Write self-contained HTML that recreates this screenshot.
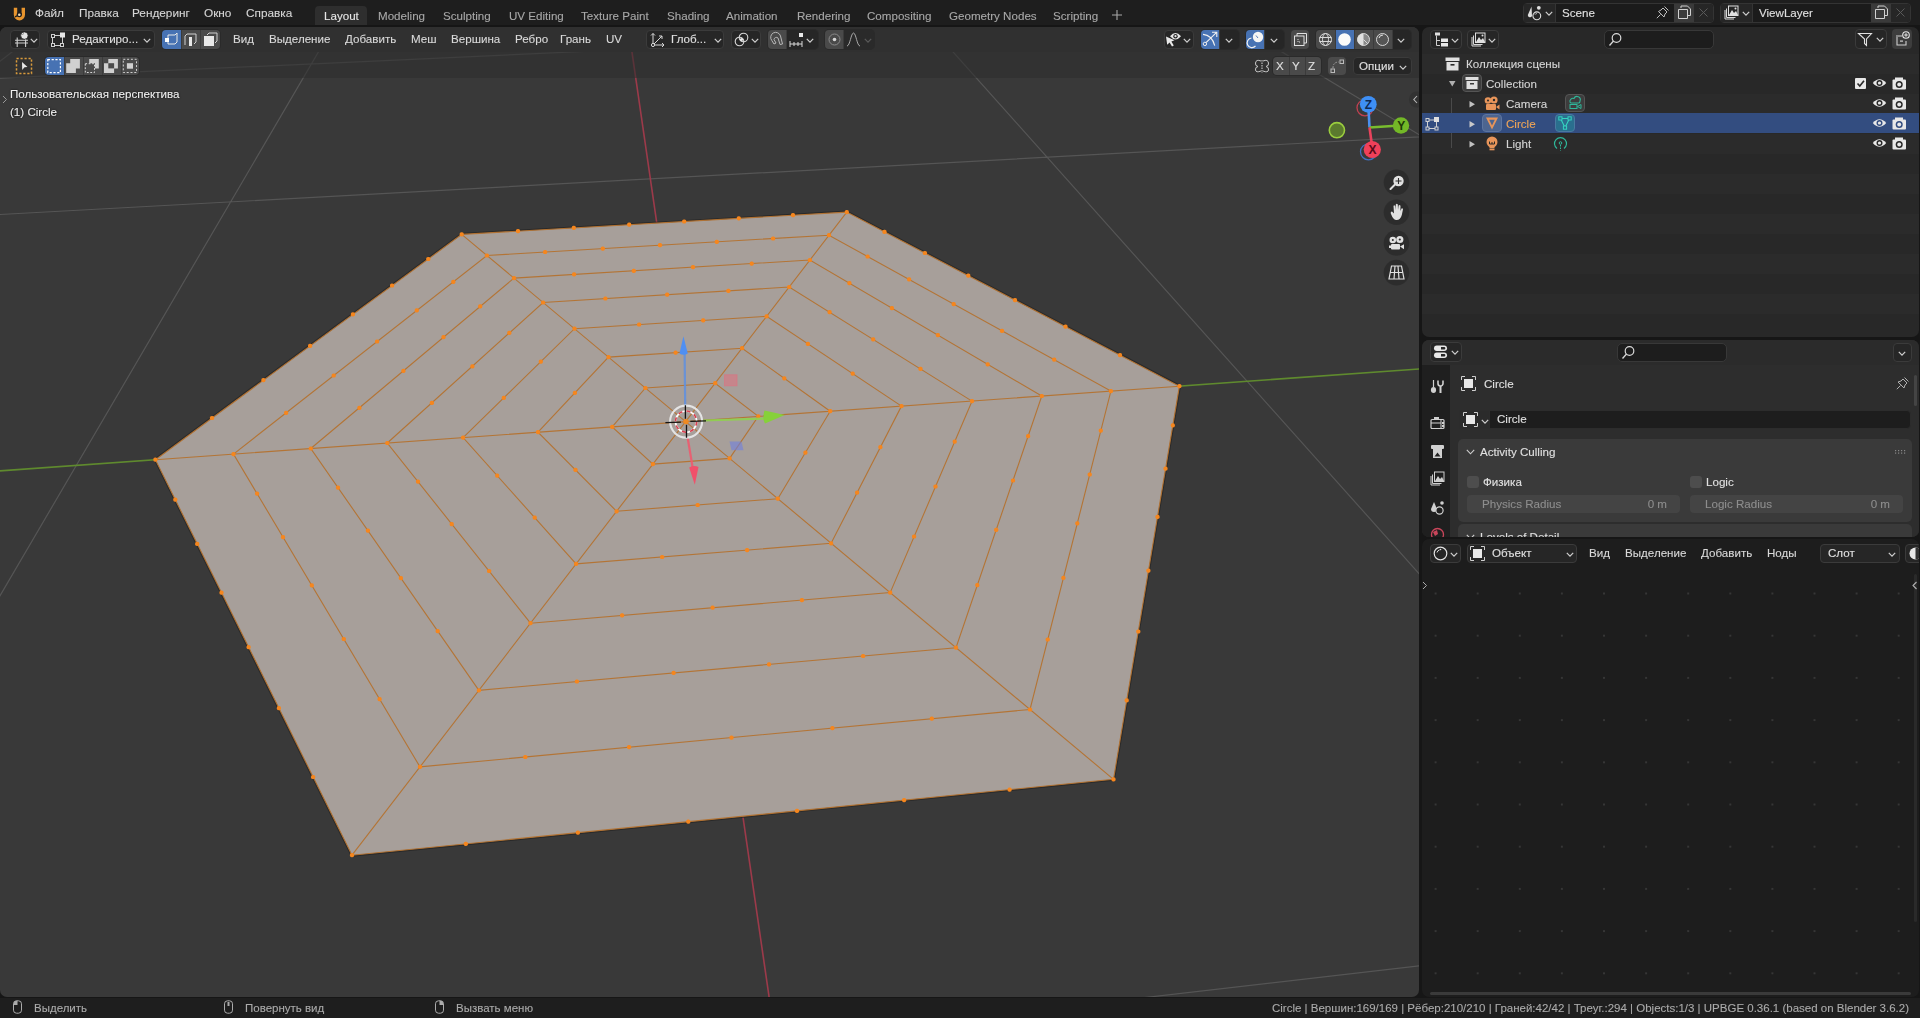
<!DOCTYPE html><html><head><meta charset="utf-8"><style>
*{box-sizing:border-box;margin:0;padding:0}
html,body{width:1920px;height:1018px;overflow:hidden;background:#161616;font-family:"Liberation Sans",sans-serif;font-size:11.5px;color:#d4d4d4}
.a{position:absolute}
.t{position:absolute;white-space:nowrap;line-height:14px;will-change:transform;-webkit-text-stroke:0.1px currentColor}
.btn{position:absolute;background:#282828;border:1px solid #3a3a3a;border-radius:4px}
.btn2{position:absolute;background:#545454;border-radius:4px}
svg{position:absolute;left:0;top:0;overflow:visible}
</style></head><body><div class="a" style="left:0;top:0;width:1920px;height:25px;background:#1e1e1e"></div><div class="a" style="left:0;top:998px;width:1920px;height:20px;background:#1e1e1e"></div><div id="vp" class="a" style="left:0;top:27px;width:1419px;height:970px;background:#393939;border-radius:7px;overflow:hidden"><svg width="1419" height="970" viewBox="0 27 1419 970" style="top:0;left:0"><path d="M-1864.9 316.6 L2514.1 76.9 M-1224.5 134.1 L2107.4 -18.1 M-2974.7 1473.8 L4697.9 586.8 M424.1 -128.5 L-2563.1 4972.8 M781.3 -140.3 L4996.3 4578.5 M238.7 -122.4 L-2907.0 2298.5 M953.5 -145.9 L4918.5 2243.4" stroke="#555555" stroke-width="1.2" fill="none"/><path d="M604.9 -134.5 L1336.8 4909.0" stroke="#9c3a4a" stroke-width="1.6" fill="none"/><path d="M-2995.2 685.9 L3213.4 240.1" stroke="#5f8a2e" stroke-width="1.6" fill="none"/><polygon points="155.4,459.7 461.7,234.4 846.8,212.1 1179.4,386.2 1113.5,779.3 352.0,855.2" fill="none" stroke="#242424" stroke-width="3" stroke-opacity="0.75" stroke-linejoin="round"/>
<polygon points="155.4,459.7 461.7,234.4 846.8,212.1 1179.4,386.2 1113.5,779.3 352.0,855.2" fill="#a79f9a"/>
<path d="M612.2 426.9 L645.4 388.0 L715.2 383.2 L758.3 416.4 L729.6 458.4 L652.9 464.1 Z M538.0 432.2 L608.5 357.1 L742.1 348.2 L830.2 411.2 L777.8 498.7 L616.6 511.3 Z M463.1 437.6 L574.5 328.7 L766.6 316.3 L901.5 406.1 L831.1 543.3 L576.1 563.9 Z M387.3 443.0 L543.1 302.5 L789.2 287.0 L972.0 401.1 L890.2 592.6 L530.5 623.2 Z M310.8 448.5 L514.0 278.1 L809.9 260.0 L1041.8 396.0 L956.0 647.7 L478.9 690.3 Z M233.5 454.1 L486.9 255.5 L829.0 235.2 L1110.9 391.1 L1030.0 709.5 L420.0 766.9 Z M155.4 459.7 L461.7 234.4 L846.8 212.1 L1179.4 386.2 L1113.5 779.3 L352.0 855.2 Z M685.6 421.6 L155.4 459.7 M685.6 421.6 L461.7 234.4 M685.6 421.6 L846.8 212.1 M685.6 421.6 L1179.4 386.2 M685.6 421.6 L1113.5 779.3 M685.6 421.6 L352.0 855.2" fill="none" stroke="#b4722f" stroke-width="1.1" stroke-opacity="0.95"/>
<g fill="#f5861e"><rect x="683.5" y="419.5" width="4.2" height="4.2" rx="1.7"/><rect x="610.1" y="424.8" width="4.2" height="4.2" rx="1.7"/><rect x="643.3" y="385.9" width="4.2" height="4.2" rx="1.7"/><rect x="713.1" y="381.1" width="4.2" height="4.2" rx="1.7"/><rect x="756.2" y="414.3" width="4.2" height="4.2" rx="1.7"/><rect x="727.5" y="456.3" width="4.2" height="4.2" rx="1.7"/><rect x="650.8" y="462.0" width="4.2" height="4.2" rx="1.7"/><rect x="535.9" y="430.1" width="4.2" height="4.2" rx="1.7"/><rect x="572.8" y="390.8" width="4.2" height="4.2" rx="1.7"/><rect x="606.4" y="355.0" width="4.2" height="4.2" rx="1.7"/><rect x="673.5" y="350.6" width="4.2" height="4.2" rx="1.7"/><rect x="740.0" y="346.1" width="4.2" height="4.2" rx="1.7"/><rect x="782.2" y="376.3" width="4.2" height="4.2" rx="1.7"/><rect x="828.1" y="409.1" width="4.2" height="4.2" rx="1.7"/><rect x="803.3" y="450.6" width="4.2" height="4.2" rx="1.7"/><rect x="775.7" y="496.6" width="4.2" height="4.2" rx="1.7"/><rect x="695.6" y="502.9" width="4.2" height="4.2" rx="1.7"/><rect x="614.5" y="509.2" width="4.2" height="4.2" rx="1.7"/><rect x="573.4" y="467.8" width="4.2" height="4.2" rx="1.7"/><rect x="461.0" y="435.5" width="4.2" height="4.2" rx="1.7"/><rect x="501.7" y="395.7" width="4.2" height="4.2" rx="1.7"/><rect x="538.7" y="359.6" width="4.2" height="4.2" rx="1.7"/><rect x="572.4" y="326.6" width="4.2" height="4.2" rx="1.7"/><rect x="637.0" y="322.4" width="4.2" height="4.2" rx="1.7"/><rect x="701.1" y="318.3" width="4.2" height="4.2" rx="1.7"/><rect x="764.5" y="314.2" width="4.2" height="4.2" rx="1.7"/><rect x="805.8" y="341.7" width="4.2" height="4.2" rx="1.7"/><rect x="850.6" y="371.5" width="4.2" height="4.2" rx="1.7"/><rect x="899.4" y="404.0" width="4.2" height="4.2" rx="1.7"/><rect x="878.3" y="445.0" width="4.2" height="4.2" rx="1.7"/><rect x="855.0" y="490.5" width="4.2" height="4.2" rx="1.7"/><rect x="829.0" y="541.2" width="4.2" height="4.2" rx="1.7"/><rect x="745.0" y="548.0" width="4.2" height="4.2" rx="1.7"/><rect x="660.0" y="554.9" width="4.2" height="4.2" rx="1.7"/><rect x="574.0" y="561.8" width="4.2" height="4.2" rx="1.7"/><rect x="532.6" y="515.5" width="4.2" height="4.2" rx="1.7"/><rect x="495.1" y="473.6" width="4.2" height="4.2" rx="1.7"/><rect x="385.2" y="440.9" width="4.2" height="4.2" rx="1.7"/><rect x="429.8" y="400.7" width="4.2" height="4.2" rx="1.7"/><rect x="470.3" y="364.2" width="4.2" height="4.2" rx="1.7"/><rect x="507.2" y="330.8" width="4.2" height="4.2" rx="1.7"/><rect x="541.0" y="300.4" width="4.2" height="4.2" rx="1.7"/><rect x="603.3" y="296.4" width="4.2" height="4.2" rx="1.7"/><rect x="665.1" y="292.6" width="4.2" height="4.2" rx="1.7"/><rect x="726.3" y="288.7" width="4.2" height="4.2" rx="1.7"/><rect x="787.1" y="284.9" width="4.2" height="4.2" rx="1.7"/><rect x="827.5" y="310.1" width="4.2" height="4.2" rx="1.7"/><rect x="871.1" y="337.3" width="4.2" height="4.2" rx="1.7"/><rect x="918.4" y="366.8" width="4.2" height="4.2" rx="1.7"/><rect x="969.9" y="399.0" width="4.2" height="4.2" rx="1.7"/><rect x="952.6" y="439.5" width="4.2" height="4.2" rx="1.7"/><rect x="933.4" y="484.4" width="4.2" height="4.2" rx="1.7"/><rect x="912.0" y="534.4" width="4.2" height="4.2" rx="1.7"/><rect x="888.1" y="590.5" width="4.2" height="4.2" rx="1.7"/><rect x="799.8" y="598.0" width="4.2" height="4.2" rx="1.7"/><rect x="710.5" y="605.6" width="4.2" height="4.2" rx="1.7"/><rect x="620.0" y="613.3" width="4.2" height="4.2" rx="1.7"/><rect x="528.4" y="621.1" width="4.2" height="4.2" rx="1.7"/><rect x="487.0" y="568.9" width="4.2" height="4.2" rx="1.7"/><rect x="449.6" y="522.0" width="4.2" height="4.2" rx="1.7"/><rect x="415.9" y="479.5" width="4.2" height="4.2" rx="1.7"/><rect x="308.7" y="446.4" width="4.2" height="4.2" rx="1.7"/><rect x="357.3" y="405.7" width="4.2" height="4.2" rx="1.7"/><rect x="401.3" y="368.8" width="4.2" height="4.2" rx="1.7"/><rect x="441.4" y="335.1" width="4.2" height="4.2" rx="1.7"/><rect x="478.1" y="304.3" width="4.2" height="4.2" rx="1.7"/><rect x="511.9" y="276.0" width="4.2" height="4.2" rx="1.7"/><rect x="572.0" y="272.3" width="4.2" height="4.2" rx="1.7"/><rect x="631.7" y="268.7" width="4.2" height="4.2" rx="1.7"/><rect x="690.9" y="265.1" width="4.2" height="4.2" rx="1.7"/><rect x="749.6" y="261.5" width="4.2" height="4.2" rx="1.7"/><rect x="807.8" y="257.9" width="4.2" height="4.2" rx="1.7"/><rect x="847.3" y="281.1" width="4.2" height="4.2" rx="1.7"/><rect x="889.8" y="306.0" width="4.2" height="4.2" rx="1.7"/><rect x="935.8" y="333.0" width="4.2" height="4.2" rx="1.7"/><rect x="985.6" y="362.2" width="4.2" height="4.2" rx="1.7"/><rect x="1039.7" y="393.9" width="4.2" height="4.2" rx="1.7"/><rect x="1026.0" y="434.0" width="4.2" height="4.2" rx="1.7"/><rect x="1010.9" y="478.4" width="4.2" height="4.2" rx="1.7"/><rect x="994.1" y="527.8" width="4.2" height="4.2" rx="1.7"/><rect x="975.2" y="583.1" width="4.2" height="4.2" rx="1.7"/><rect x="953.9" y="645.6" width="4.2" height="4.2" rx="1.7"/><rect x="861.0" y="653.9" width="4.2" height="4.2" rx="1.7"/><rect x="766.9" y="662.3" width="4.2" height="4.2" rx="1.7"/><rect x="671.5" y="670.8" width="4.2" height="4.2" rx="1.7"/><rect x="574.8" y="679.4" width="4.2" height="4.2" rx="1.7"/><rect x="476.8" y="688.2" width="4.2" height="4.2" rx="1.7"/><rect x="435.6" y="629.0" width="4.2" height="4.2" rx="1.7"/><rect x="398.8" y="576.0" width="4.2" height="4.2" rx="1.7"/><rect x="365.8" y="528.5" width="4.2" height="4.2" rx="1.7"/><rect x="335.9" y="485.5" width="4.2" height="4.2" rx="1.7"/><rect x="231.4" y="452.0" width="4.2" height="4.2" rx="1.7"/><rect x="284.0" y="410.8" width="4.2" height="4.2" rx="1.7"/><rect x="331.6" y="373.4" width="4.2" height="4.2" rx="1.7"/><rect x="375.0" y="339.4" width="4.2" height="4.2" rx="1.7"/><rect x="414.7" y="308.3" width="4.2" height="4.2" rx="1.7"/><rect x="451.2" y="279.7" width="4.2" height="4.2" rx="1.7"/><rect x="484.8" y="253.4" width="4.2" height="4.2" rx="1.7"/><rect x="543.0" y="249.9" width="4.2" height="4.2" rx="1.7"/><rect x="600.7" y="246.5" width="4.2" height="4.2" rx="1.7"/><rect x="657.9" y="243.1" width="4.2" height="4.2" rx="1.7"/><rect x="714.7" y="239.7" width="4.2" height="4.2" rx="1.7"/><rect x="771.0" y="236.4" width="4.2" height="4.2" rx="1.7"/><rect x="826.9" y="233.1" width="4.2" height="4.2" rx="1.7"/><rect x="865.5" y="254.4" width="4.2" height="4.2" rx="1.7"/><rect x="907.0" y="277.3" width="4.2" height="4.2" rx="1.7"/><rect x="951.6" y="302.0" width="4.2" height="4.2" rx="1.7"/><rect x="999.9" y="328.7" width="4.2" height="4.2" rx="1.7"/><rect x="1052.1" y="357.6" width="4.2" height="4.2" rx="1.7"/><rect x="1108.8" y="389.0" width="4.2" height="4.2" rx="1.7"/><rect x="1098.7" y="428.6" width="4.2" height="4.2" rx="1.7"/><rect x="1087.6" y="472.4" width="4.2" height="4.2" rx="1.7"/><rect x="1075.2" y="521.2" width="4.2" height="4.2" rx="1.7"/><rect x="1061.3" y="575.8" width="4.2" height="4.2" rx="1.7"/><rect x="1045.6" y="637.4" width="4.2" height="4.2" rx="1.7"/><rect x="1027.9" y="707.4" width="4.2" height="4.2" rx="1.7"/><rect x="929.7" y="716.6" width="4.2" height="4.2" rx="1.7"/><rect x="830.3" y="726.0" width="4.2" height="4.2" rx="1.7"/><rect x="729.4" y="735.5" width="4.2" height="4.2" rx="1.7"/><rect x="627.0" y="745.1" width="4.2" height="4.2" rx="1.7"/><rect x="523.2" y="754.9" width="4.2" height="4.2" rx="1.7"/><rect x="417.9" y="764.8" width="4.2" height="4.2" rx="1.7"/><rect x="377.5" y="697.0" width="4.2" height="4.2" rx="1.7"/><rect x="341.7" y="636.9" width="4.2" height="4.2" rx="1.7"/><rect x="309.7" y="583.3" width="4.2" height="4.2" rx="1.7"/><rect x="280.9" y="535.1" width="4.2" height="4.2" rx="1.7"/><rect x="255.0" y="491.5" width="4.2" height="4.2" rx="1.7"/><rect x="153.3" y="457.6" width="4.2" height="4.2" rx="1.7"/><rect x="209.9" y="415.9" width="4.2" height="4.2" rx="1.7"/><rect x="261.3" y="378.1" width="4.2" height="4.2" rx="1.7"/><rect x="308.0" y="343.8" width="4.2" height="4.2" rx="1.7"/><rect x="350.8" y="312.3" width="4.2" height="4.2" rx="1.7"/><rect x="390.0" y="283.4" width="4.2" height="4.2" rx="1.7"/><rect x="426.2" y="256.9" width="4.2" height="4.2" rx="1.7"/><rect x="459.6" y="232.3" width="4.2" height="4.2" rx="1.7"/><rect x="515.9" y="229.0" width="4.2" height="4.2" rx="1.7"/><rect x="571.7" y="225.8" width="4.2" height="4.2" rx="1.7"/><rect x="627.1" y="222.6" width="4.2" height="4.2" rx="1.7"/><rect x="682.1" y="219.4" width="4.2" height="4.2" rx="1.7"/><rect x="736.7" y="216.3" width="4.2" height="4.2" rx="1.7"/><rect x="790.9" y="213.1" width="4.2" height="4.2" rx="1.7"/><rect x="844.7" y="210.0" width="4.2" height="4.2" rx="1.7"/><rect x="882.4" y="229.8" width="4.2" height="4.2" rx="1.7"/><rect x="922.8" y="250.9" width="4.2" height="4.2" rx="1.7"/><rect x="966.2" y="273.6" width="4.2" height="4.2" rx="1.7"/><rect x="1012.9" y="298.1" width="4.2" height="4.2" rx="1.7"/><rect x="1063.4" y="324.5" width="4.2" height="4.2" rx="1.7"/><rect x="1117.9" y="353.0" width="4.2" height="4.2" rx="1.7"/><rect x="1177.3" y="384.1" width="4.2" height="4.2" rx="1.7"/><rect x="1170.7" y="423.2" width="4.2" height="4.2" rx="1.7"/><rect x="1163.4" y="466.5" width="4.2" height="4.2" rx="1.7"/><rect x="1155.4" y="514.7" width="4.2" height="4.2" rx="1.7"/><rect x="1146.3" y="568.6" width="4.2" height="4.2" rx="1.7"/><rect x="1136.2" y="629.4" width="4.2" height="4.2" rx="1.7"/><rect x="1124.6" y="698.3" width="4.2" height="4.2" rx="1.7"/><rect x="1111.4" y="777.2" width="4.2" height="4.2" rx="1.7"/><rect x="1007.5" y="787.6" width="4.2" height="4.2" rx="1.7"/><rect x="902.0" y="798.1" width="4.2" height="4.2" rx="1.7"/><rect x="794.9" y="808.8" width="4.2" height="4.2" rx="1.7"/><rect x="686.2" y="819.6" width="4.2" height="4.2" rx="1.7"/><rect x="575.8" y="830.6" width="4.2" height="4.2" rx="1.7"/><rect x="463.7" y="841.8" width="4.2" height="4.2" rx="1.7"/><rect x="349.9" y="853.1" width="4.2" height="4.2" rx="1.7"/><rect x="311.0" y="774.9" width="4.2" height="4.2" rx="1.7"/><rect x="276.8" y="706.0" width="4.2" height="4.2" rx="1.7"/><rect x="246.5" y="645.0" width="4.2" height="4.2" rx="1.7"/><rect x="219.4" y="590.6" width="4.2" height="4.2" rx="1.7"/><rect x="195.1" y="541.7" width="4.2" height="4.2" rx="1.7"/><rect x="173.2" y="497.6" width="4.2" height="4.2" rx="1.7"/></g><rect x="724.5" y="374.8" width="12.5" height="11" fill="#e07080" fill-opacity="0.55" stroke="#e07080" stroke-opacity="0.6"/><path d="M729.5 441.6 L741.5 441.6 L743.5 450.2 L731.5 450.2 Z" fill="#7080e0" fill-opacity="0.6"/><path d="M685.2 405 L684.6 352" stroke="#5e8fe0" stroke-width="2.2" stroke-opacity="0.85"/><path d="M683.4 336.3 L687.8 353.5 Q683.5 356 679.5 353.5 Z" fill="#4f8ff2"/><path d="M703 420.5 L764 418.6" stroke="#8fd14f" stroke-width="2.2" stroke-opacity="0.9"/><path d="M784.8 414.9 L764.5 410.4 Q762 418.4 765 423.4 Z" fill="#86d13a"/><path d="M687.7 438 L693 469.8" stroke="#ee5a6e" stroke-width="2.2" stroke-opacity="0.9"/><path d="M694.8 484.8 L689.2 467.5 Q694 465 698.5 467 Z" fill="#f0506a"/><circle cx="686.1" cy="421.6" r="16" fill="none" stroke="#e4e4e4" stroke-width="2.1"/><circle cx="686.1" cy="421.6" r="10.6" fill="none" stroke="#ffffff" stroke-width="1.6"/><circle cx="686.1" cy="421.6" r="10.6" fill="none" stroke="#d84050" stroke-width="1.6" stroke-dasharray="4.16 4.16"/><path d="M685.4 405.3 V418.8 M686.5 424.7 V437.7 M665.4 422.6 L681 422.2 M690.3 421.4 L706 420.8" stroke="#151515" stroke-width="1.3"/><circle cx="686.1" cy="421.6" r="2.6" fill="#f08a20"/><circle cx="1365" cy="107.8" r="8" fill="none" stroke="#c04050" stroke-width="1.3"/><circle cx="1368.5" cy="151.8" r="8" fill="none" stroke="#4070c0" stroke-width="1.3"/><circle cx="1336.9" cy="130.2" r="7.6" fill="#5b7a2e" stroke="#9acd3e" stroke-width="1.6"/><path d="M1369.5 127.5 L1368.5 108" stroke="#4a90f0" stroke-width="2.6"/><path d="M1369.5 127.5 L1396 125.8" stroke="#79bd2e" stroke-width="2.6"/><path d="M1369.5 127.5 L1371.8 144" stroke="#e8435c" stroke-width="2.6"/><circle cx="1368.3" cy="104.3" r="8.4" fill="#3e8ff5"/><circle cx="1401" cy="125.5" r="8.2" fill="#73b827"/><circle cx="1372.3" cy="149.5" r="8.6" fill="#f0405a"/><text x="1368.3" y="108.6" font-family="Liberation Sans" font-weight="bold" font-size="12" text-anchor="middle" fill="#0f2a55">Z</text><text x="1401.2" y="129.8" font-family="Liberation Sans" font-weight="bold" font-size="12" text-anchor="middle" fill="#1f3a08">Y</text><text x="1372.5" y="153.8" font-family="Liberation Sans" font-weight="bold" font-size="12" text-anchor="middle" fill="#5a0a18">X</text><circle cx="1396.5" cy="182.2" r="12.8" fill="#2b2b2b" fill-opacity="0.9"/><circle cx="1396.5" cy="212.3" r="12.8" fill="#2b2b2b" fill-opacity="0.9"/><circle cx="1396.5" cy="243" r="12.8" fill="#2b2b2b" fill-opacity="0.9"/><circle cx="1396.5" cy="272.6" r="12.8" fill="#2b2b2b" fill-opacity="0.9"/><circle cx="1398.5" cy="181" r="5.2" fill="#e0e0e0"/><path d="M1398.5 178 V184 M1395.5 181 H1401.5" stroke="#2b2b2b" stroke-width="1.1"/><path d="M1395 184.5 L1390.5 189" stroke="#e0e0e0" stroke-width="2" stroke-linecap="round"/><path d="M1391 214 Q1390 212 1392 211.5 L1394 213.5 L1393.5 206 Q1394 204.5 1395.2 206 L1395.6 210 L1395.8 204.5 Q1396.8 203 1397.8 204.5 L1398 210 L1398.6 205.5 Q1399.6 204.2 1400.5 205.8 L1400.4 211 L1401.5 208.5 Q1402.6 207.8 1403 209.2 L1401.8 215 Q1400.5 220 1396.5 220 Q1393.2 220 1391 214 Z" fill="#e0e0e0"/><circle cx="1392.8" cy="240" r="3.3" fill="#e0e0e0"/><circle cx="1399.8" cy="239.5" r="3.6" fill="#e0e0e0"/><circle cx="1392.8" cy="240" r="1" fill="#2b2b2b"/><circle cx="1399.8" cy="239.5" r="1.1" fill="#2b2b2b"/><rect x="1391" y="244" width="9" height="5.5" rx="1" fill="#e0e0e0"/><path d="M1400 246.5 L1404 244.2 V249.3 Z" fill="#e0e0e0"/><rect x="1389" y="245.5" width="2" height="2.5" fill="#e0e0e0"/><path d="M1391.5 266 H1401.5 L1404 279 H1389 Z M1390.3 272.5 H1402.7 M1395 266 L1394 279 M1398 266 L1399 279" fill="none" stroke="#e0e0e0" stroke-width="1.2"/><circle cx="1417" cy="99.5" r="8" fill="#2f2f2f" fill-opacity="0.7"/><path d="M1417 96 L1413.8 99.5 L1417 103" fill="none" stroke="#b8b8b8" stroke-width="1.1"/></svg><div class="a" style="left:0px;top:0px;width:1419px;height:25px;background:#303030;border-radius:0px;"></div><div class="a" style="left:0px;top:25px;width:1419px;height:26px;background:rgba(47,47,47,0.6);border-radius:0px;"></div><div class="a" style="left:10px;top:3px;width:30px;height:19px;background:#262626;border-radius:4px;border:1px solid #3b3b3b;"></div><svg width="16" height="16" viewBox="0 0 16 16" style="left:14px;top:5px"><path d="M1 8.2 H14 M1 11 H14 M3.2 5.5 V15 M11.6 6 V15" stroke="#d0d0d0" stroke-width="1.1" fill="none"/><circle cx="10.4" cy="3.6" r="3.7" fill="#e4e4e4" stroke="#262626" stroke-width=".8"/><path d="M8.3 2.8 A2 2 0 0 1 10 1.6" fill="none" stroke="#777" stroke-width=".8"/></svg><svg width="8" height="5" viewBox="0 0 8 5" style="left:30px;top:11px"><path d="M0.8 0.8 L4.0 4.2 L7.2 0.8" fill="none" stroke="#cfcfcf" stroke-width="1.2"/></svg><div class="a" style="left:47px;top:3px;width:108px;height:19px;background:#262626;border-radius:4px;border:1px solid #3b3b3b;"></div><svg width="15" height="15" viewBox="0 0 15 15" style="left:51px;top:5px"><rect x="1.5" y="3.5" width="10" height="10" fill="none" stroke="#cfcfcf" stroke-width="1"/><rect x="0.5" y="2.5" width="3" height="3" fill="#262626" stroke="#cfcfcf"/><rect x="0.5" y="11.5" width="3" height="3" fill="#262626" stroke="#cfcfcf"/><rect x="9.5" y="11.5" width="3" height="3" fill="#262626" stroke="#cfcfcf"/><rect x="9" y="0.5" width="5" height="5" fill="#e8e8e8"/></svg><div class="t" style="left:72px;top:5px;color:#e0e0e0;font-size:11.6px;">Редактиро...</div><svg width="8" height="5" viewBox="0 0 8 5" style="left:143px;top:11px"><path d="M0.8 0.8 L4.0 4.2 L7.2 0.8" fill="none" stroke="#cfcfcf" stroke-width="1.2"/></svg><div class="a" style="left:162px;top:3px;width:58px;height:19px;border-radius:4px;overflow:hidden;display:flex;box-shadow:0 0 0 1px #2a2a2a"><div style="width:19px;height:19px;background:#4772b3;"></div><div style="width:19px;height:19px;background:#4a4a4a;border-left:1px solid #3b3b3b;"></div><div style="width:20px;height:19px;background:#4a4a4a;border-left:1px solid #3b3b3b;"></div></div><svg width="15" height="15" viewBox="0 0 15 15" style="left:164px;top:5px"><path d="M4 3 H11 L13 1 M4 3 V11 L4 12 H11 L13 10 V1" fill="none" stroke="#e8e8e8" stroke-width="1"/><rect x="1" y="6" width="4" height="4" fill="#fff"/></svg><svg width="15" height="15" viewBox="0 0 15 15" style="left:183px;top:5px"><path d="M2 13 V4 L4 2 H13 V10 L11 12" fill="none" stroke="#d0d0d0" stroke-width="1"/><rect x="6" y="5" width="3" height="9" fill="#e8e8e8"/></svg><svg width="15" height="15" viewBox="0 0 15 15" style="left:203px;top:5px"><path d="M4 3 L6 1 H14 V9 L12 11" fill="none" stroke="#d0d0d0" stroke-width="1"/><rect x="1" y="4" width="10" height="10" fill="#e8e8e8"/></svg><div class="t" style="left:233px;top:5px;color:#d9d9d9;font-size:11.6px;">Вид</div><div class="t" style="left:269px;top:5px;color:#d9d9d9;font-size:11.6px;">Выделение</div><div class="t" style="left:345px;top:5px;color:#d9d9d9;font-size:11.6px;">Добавить</div><div class="t" style="left:411px;top:5px;color:#d9d9d9;font-size:11.6px;">Меш</div><div class="t" style="left:451px;top:5px;color:#d9d9d9;font-size:11.6px;">Вершина</div><div class="t" style="left:515px;top:5px;color:#d9d9d9;font-size:11.6px;">Ребро</div><div class="t" style="left:560px;top:5px;color:#d9d9d9;font-size:11.6px;">Грань</div><div class="t" style="left:606px;top:5px;color:#d9d9d9;font-size:11.6px;">UV</div><div class="a" style="left:646px;top:3px;width:78px;height:19px;background:#262626;border-radius:4px;border:1px solid #3b3b3b;"></div><svg width="15" height="15" viewBox="0 0 15 15" style="left:650px;top:5px"><path d="M3 13 V1.5 M1 3.5 L3 1.5 L5 3.5 M3 13 H14 M12 11 L14 13 L12 15 M3 13 L12 4 M9 4 H12 V7" fill="none" stroke="#d8d8d8" stroke-width="1"/><circle cx="3" cy="13" r="1.6" fill="#262626" stroke="#d8d8d8"/></svg><div class="t" style="left:671px;top:5px;color:#e0e0e0;font-size:11.6px;">Глоб...</div><svg width="8" height="5" viewBox="0 0 8 5" style="left:714px;top:11px"><path d="M0.8 0.8 L4.0 4.2 L7.2 0.8" fill="none" stroke="#cfcfcf" stroke-width="1.2"/></svg><div class="a" style="left:731px;top:3px;width:30px;height:19px;background:#262626;border-radius:4px;border:1px solid #3b3b3b;"></div><svg width="15" height="15" viewBox="0 0 15 15" style="left:734px;top:5px"><circle cx="5.5" cy="9.5" r="4.3" fill="none" stroke="#d8d8d8" stroke-width="1.1"/><circle cx="9.5" cy="5.5" r="4.3" fill="none" stroke="#d8d8d8" stroke-width="1.1"/><circle cx="7.5" cy="7.5" r="1.6" fill="#e8e8e8"/></svg><svg width="8" height="5" viewBox="0 0 8 5" style="left:751px;top:11px"><path d="M0.8 0.8 L4.0 4.2 L7.2 0.8" fill="none" stroke="#cfcfcf" stroke-width="1.2"/></svg><div class="a" style="left:768px;top:3px;width:50px;height:19px;border-radius:4px;overflow:hidden;display:flex;box-shadow:0 0 0 1px #2a2a2a"><div style="width:18px;height:19px;background:#4a4a4a;"></div><div style="width:32px;height:19px;background:#262626;border-left:1px solid #3b3b3b;"></div></div><svg width="15" height="15" viewBox="0 0 15 15" style="left:770px;top:5px"><path d="M4 12 L1.8 8.5 A5 5 0 1 1 10.5 4 L12.5 12 L10 12.5 L8 6 A2.4 2.4 0 0 0 4 7.5 L6 11 Z" fill="none" stroke="#b8b8b8" stroke-width="1"/></svg><svg width="15" height="15" viewBox="0 0 15 15" style="left:789px;top:5px"><path d="M1 9 V15 M13 9 V15 M1 12 H13 M5 10 V14 M9 10 V14" stroke="#d8d8d8" stroke-width="1" fill="none"/><rect x="10" y="1" width="4" height="4" fill="#e8e8e8"/></svg><svg width="8" height="5" viewBox="0 0 8 5" style="left:806px;top:11px"><path d="M0.8 0.8 L4.0 4.2 L7.2 0.8" fill="none" stroke="#cfcfcf" stroke-width="1.2"/></svg><div class="a" style="left:825px;top:3px;width:49px;height:19px;border-radius:4px;overflow:hidden;display:flex;box-shadow:0 0 0 1px #2a2a2a"><div style="width:18px;height:19px;background:#4a4a4a;"></div><div style="width:31px;height:19px;background:#2a2a2a;border-left:1px solid #3b3b3b;"></div></div><svg width="15" height="15" viewBox="0 0 15 15" style="left:827px;top:5px"><circle cx="7.5" cy="7.5" r="5.5" fill="none" stroke="#8a8a8a" stroke-width="1"/><circle cx="7.5" cy="7.5" r="1.8" fill="#d8d8d8"/></svg><svg width="15" height="15" viewBox="0 0 15 15" style="left:846px;top:5px"><path d="M1 14 C4 14 5 1 7.5 1 C10 1 11 14 14 14" fill="none" stroke="#a8a8a8" stroke-width="1"/></svg><svg width="8" height="5" viewBox="0 0 8 5" style="left:864px;top:11px"><path d="M0.8 0.8 L4.0 4.2 L7.2 0.8" fill="none" stroke="#5a5a5a" stroke-width="1.2"/></svg><div class="a" style="left:1164px;top:3px;width:30px;height:19px;background:#262626;border-radius:4px;border:1px solid #3b3b3b;"></div><svg width="18" height="17" viewBox="0 0 18 17" style="left:1165px;top:4px"><path d="M1 5.5 L9.5 9.3 L6.4 10.4 L8.8 14.6 L7 15.6 L4.6 11.4 L2.2 13.8 Z" fill="#e8e8e8"/><path d="M5 5.2 Q10.5 -1.2 16 5.2 Q10.5 11.6 5 5.2 Z" fill="#e8e8e8"/><circle cx="10.5" cy="5.2" r="2.2" fill="#262626"/><circle cx="10.5" cy="5.2" r="1.1" fill="#e8e8e8"/></svg><svg width="8" height="5" viewBox="0 0 8 5" style="left:1183px;top:11px"><path d="M0.8 0.8 L4.0 4.2 L7.2 0.8" fill="none" stroke="#cfcfcf" stroke-width="1.2"/></svg><div class="a" style="left:1201px;top:3px;width:38px;height:19px;border-radius:4px;overflow:hidden;display:flex;box-shadow:0 0 0 1px #2a2a2a"><div style="width:18px;height:19px;background:#4772b3;"></div><div style="width:20px;height:19px;background:#262626;border-left:1px solid #3b3b3b;"></div></div><svg width="18" height="18" viewBox="0 0 18 18" style="left:1201px;top:3px"><path d="M2 4.4 Q11 5 13.7 15.7" fill="none" stroke="#f0f0f0" stroke-width="1.1"/><path d="M5 12.7 L15.6 2.4 M11 2.3 H15.8 V7" fill="none" stroke="#f0f0f0" stroke-width="1.1"/><circle cx="3.9" cy="13.9" r="1.7" fill="#4772b3" stroke="#f0f0f0" stroke-width="1"/></svg><svg width="8" height="5" viewBox="0 0 8 5" style="left:1225px;top:11px"><path d="M0.8 0.8 L4.0 4.2 L7.2 0.8" fill="none" stroke="#cfcfcf" stroke-width="1.2"/></svg><div class="a" style="left:1246px;top:3px;width:38px;height:19px;border-radius:4px;overflow:hidden;display:flex;box-shadow:0 0 0 1px #2a2a2a"><div style="width:18px;height:19px;background:#4772b3;"></div><div style="width:20px;height:19px;background:#262626;border-left:1px solid #3b3b3b;"></div></div><svg width="18" height="18" viewBox="0 0 18 18" style="left:1247px;top:3px"><path d="M8.5 16 A4.8 4.8 0 1 1 4.5 8" fill="none" stroke="#f0f0f0" stroke-width="1.2"/><circle cx="11" cy="7" r="5.2" fill="#f4f4f4"/><path d="M9 5.5 L11 8" stroke="#4772b3" stroke-width=".9"/></svg><svg width="8" height="5" viewBox="0 0 8 5" style="left:1270px;top:11px"><path d="M0.8 0.8 L4.0 4.2 L7.2 0.8" fill="none" stroke="#cfcfcf" stroke-width="1.2"/></svg><div class="a" style="left:1291px;top:3px;width:18px;height:19px;background:#4a4a4a;border-radius:4px;"></div><svg width="15" height="15" viewBox="0 0 15 15" style="left:1293px;top:5px"><path d="M4 4 V1.5 H13.5 V11 H11" fill="none" stroke="#e0e0e0" stroke-width="1"/><rect x="1.5" y="4" width="9.5" height="9.5" fill="none" stroke="#e0e0e0" stroke-width="1"/><path d="M5 7 V10 H8" fill="none" stroke="#e0e0e0" stroke-width="1" stroke-dasharray="1 1"/></svg><div class="a" style="left:1316px;top:3px;width:95px;height:19px;border-radius:4px;overflow:hidden;display:flex;box-shadow:0 0 0 1px #2a2a2a"><div style="width:19px;height:19px;background:#4a4a4a;"></div><div style="width:19px;height:19px;background:#4772b3;border-left:1px solid #3b3b3b;"></div><div style="width:19px;height:19px;background:#4a4a4a;border-left:1px solid #3b3b3b;"></div><div style="width:19px;height:19px;background:#4a4a4a;border-left:1px solid #3b3b3b;"></div><div style="width:19px;height:19px;background:#262626;border-left:1px solid #3b3b3b;"></div></div><svg width="15" height="15" viewBox="0 0 15 15" style="left:1318px;top:5px"><circle cx="7.5" cy="7.5" r="6" fill="none" stroke="#d8d8d8" stroke-width="1"/><ellipse cx="7.5" cy="7.5" rx="3" ry="6" fill="none" stroke="#d8d8d8" stroke-width="1"/><path d="M1.5 5.5 H13.5 M1.5 9.5 H13.5" stroke="#d8d8d8" stroke-width="1"/></svg><svg width="15" height="15" viewBox="0 0 15 15" style="left:1337px;top:5px"><circle cx="7.5" cy="7.5" r="6.3" fill="#fafafa"/></svg><svg width="15" height="15" viewBox="0 0 15 15" style="left:1356px;top:5px"><circle cx="7.5" cy="7.5" r="6" fill="#888" stroke="#d8d8d8" stroke-width="1"/><path d="M7.5 1.5 A6 6 0 0 0 7.5 13.5 Z" fill="#e0e0e0"/><path d="M7.5 7.5 L12 12" stroke="#d8d8d8"/></svg><svg width="15" height="15" viewBox="0 0 15 15" style="left:1375px;top:5px"><circle cx="7.5" cy="7.5" r="6" fill="#555" stroke="#d8d8d8" stroke-width="1"/><path d="M4 6 A4 4 0 0 1 8 3" fill="none" stroke="#e8e8e8" stroke-width="1"/></svg><svg width="8" height="5" viewBox="0 0 8 5" style="left:1397px;top:11px"><path d="M0.8 0.8 L4.0 4.2 L7.2 0.8" fill="none" stroke="#cfcfcf" stroke-width="1.2"/></svg><svg width="18" height="18" viewBox="0 0 18 18" style="left:15px;top:30px"><rect x="1.5" y="1.5" width="15" height="15" fill="none" stroke="#d89a3c" stroke-width="1.5" stroke-dasharray="2.2 1.8"/><path d="M7 5 L12.5 10 L9.5 10.3 L7.2 13 Z" fill="#e8e8e8"/></svg><div class="a" style="left:45px;top:30px;width:94px;height:18px;border-radius:4px;overflow:hidden;display:flex;box-shadow:0 0 0 1px #2a2a2a"><div style="width:19px;height:18px;background:#4772b3;"></div><div style="width:19px;height:18px;background:#4a4a4a;border-left:1px solid #3b3b3b;"></div><div style="width:19px;height:18px;background:#4a4a4a;border-left:1px solid #3b3b3b;"></div><div style="width:19px;height:18px;background:#4a4a4a;border-left:1px solid #3b3b3b;"></div><div style="width:18px;height:18px;background:#4a4a4a;border-left:1px solid #3b3b3b;"></div></div><svg width="1419" height="80" viewBox="0 27 1419 80" style="left:0;top:0"><rect x="47.8" y="59.6" width="12.6" height="13" fill="none" stroke="#fff" stroke-width="1.2" stroke-dasharray="2.2 1.6"/><path d="M66.2 63.2 H70.2 V59.1 H79.9 V68.4 H75.9 V73.05 H66.2 Z" fill="#d0d0d0"/><rect x="85.3" y="63.7" width="9.2" height="8.8" fill="none" stroke="#d8d8d8" stroke-width="1" stroke-dasharray="1.8 1.6"/><path d="M89.2 59.1 H98.8 V68.4 H95 V63.2 H89.2 Z" fill="#d0d0d0"/><path d="M104 63.2 H108.3 V59.1 H117.9 V68.4 H114.1 V73 H104 Z" fill="#d0d0d0"/><rect x="108.3" y="63.2" width="5.8" height="5.2" fill="#4a4a4a"/><rect x="123.3" y="59.3" width="13.2" height="13.2" fill="none" stroke="#d0d0d0" stroke-width="1" stroke-dasharray="2 1.8"/><rect x="126.9" y="63.2" width="6.1" height="5.5" fill="#d0d0d0"/></svg><svg width="16" height="13" viewBox="0 0 16 13" style="left:1254px;top:33px"><path d="M7 1 Q2 -1 1.5 3 Q1 6 4 6.5 Q1 7 1.5 10 Q2 13 7 11 M9 1 Q14 -1 14.5 3 Q15 6 12 6.5 Q15 7 14.5 10 Q14 13 9 11" fill="none" stroke="#c8c8c8" stroke-width="1"/><path d="M8 0 V13" stroke="#d8d8d8" stroke-dasharray="1.5 1"/></svg><div class="a" style="left:1273px;top:30px;width:48px;height:18px;border-radius:4px;overflow:hidden;display:flex;box-shadow:0 0 0 1px #2a2a2a"><div style="width:16px;height:18px;background:#4a4a4a;"></div><div style="width:16px;height:18px;background:#4a4a4a;border-left:1px solid #3b3b3b;"></div><div style="width:16px;height:18px;background:#4a4a4a;border-left:1px solid #3b3b3b;"></div></div><div class="t" style="left:1276px;top:32px;color:#e0e0e0;font-size:11.6px;">X</div><div class="t" style="left:1292px;top:32px;color:#e0e0e0;font-size:11.6px;">Y</div><div class="t" style="left:1308px;top:32px;color:#e0e0e0;font-size:11.6px;">Z</div><div class="a" style="left:1328px;top:30px;width:18px;height:18px;background:#4a4a4a;border-radius:4px;"></div><svg width="15" height="15" viewBox="0 0 15 15" style="left:1330px;top:32px"><rect x="10" y="1" width="3.5" height="3.5" fill="none" stroke="#bbb"/><rect x="1" y="10" width="3.5" height="3.5" fill="none" stroke="#bbb"/><path d="M3 9 Q3 3 9 3" fill="none" stroke="#aaa" stroke-dasharray="1.5 1.5"/></svg><div class="a" style="left:1353px;top:30px;width:59px;height:18px;background:#262626;border-radius:4px;border:1px solid #3b3b3b;"></div><div class="t" style="left:1359px;top:32px;color:#e0e0e0;font-size:11.6px;">Опции</div><svg width="8" height="5" viewBox="0 0 8 5" style="left:1399px;top:38px"><path d="M0.8 0.8 L4.0 4.2 L7.2 0.8" fill="none" stroke="#cfcfcf" stroke-width="1.2"/></svg><div class="t" style="left:10px;top:60px;color:#f0f0f0;font-size:11.6px;text-shadow:0 0 2px #000">Пользовательская перспектива</div><div class="t" style="left:10px;top:78px;color:#f0f0f0;font-size:11.6px;text-shadow:0 0 2px #000">(1) Circle</div><svg width="6" height="9" viewBox="0 0 6 9" style="left:2px;top:68px"><path d="M1 1 L4.5 4.5 L1 8" fill="none" stroke="#999" stroke-width="1"/></svg></div><div id="ol" class="a" style="left:1422px;top:27px;width:497px;height:310px;background:#282828;border-radius:7px;overflow:hidden"><div class="a" style="left:0px;top:27px;width:498px;height:20px;background:#2b2b2b;border-radius:0px;"></div><div class="a" style="left:0px;top:67px;width:498px;height:20px;background:#2b2b2b;border-radius:0px;"></div><div class="a" style="left:0px;top:107px;width:498px;height:20px;background:#2b2b2b;border-radius:0px;"></div><div class="a" style="left:0px;top:147px;width:498px;height:20px;background:#2b2b2b;border-radius:0px;"></div><div class="a" style="left:0px;top:187px;width:498px;height:20px;background:#2b2b2b;border-radius:0px;"></div><div class="a" style="left:0px;top:227px;width:498px;height:20px;background:#2b2b2b;border-radius:0px;"></div><div class="a" style="left:0px;top:267px;width:498px;height:20px;background:#2b2b2b;border-radius:0px;"></div><div class="a" style="left:8px;top:3px;width:32px;height:19px;background:#262626;border-radius:4px;border:1px solid #3b3b3b;"></div><svg width="15" height="15" viewBox="0 0 15 15" style="left:12px;top:5px"><rect x="1" y="0.5" width="5" height="3" fill="#e0e0e0"/><path d="M2.5 3.5 V13.5 H6 M2.5 8.5 H6" fill="none" stroke="#d0d0d0" stroke-width="1"/><rect x="7" y="6.5" width="7" height="3.5" fill="#e8e8e8"/><rect x="7" y="11" width="7" height="3.5" fill="#e8e8e8"/></svg><svg width="8" height="5" viewBox="0 0 8 5" style="left:29px;top:11px"><path d="M0.8 0.8 L4.0 4.2 L7.2 0.8" fill="none" stroke="#cfcfcf" stroke-width="1.2"/></svg><div class="a" style="left:45px;top:3px;width:32px;height:19px;background:#262626;border-radius:4px;border:1px solid #3b3b3b;"></div><svg width="15" height="15" viewBox="0 0 15 15" style="left:49px;top:5px"><path d="M1 5 V14 H10 M2.5 3.5 V12.5 H11.5" fill="none" stroke="#d8d8d8" stroke-width="1"/><rect x="4.5" y="1" width="9.5" height="9.5" fill="#262626" stroke="#e0e0e0"/><path d="M5 10 L8 5 L10 8 L12 6 L14 10 Z" fill="#e0e0e0"/><circle cx="11.5" cy="3.5" r="1" fill="#e0e0e0"/></svg><svg width="8" height="5" viewBox="0 0 8 5" style="left:66px;top:11px"><path d="M0.8 0.8 L4.0 4.2 L7.2 0.8" fill="none" stroke="#cfcfcf" stroke-width="1.2"/></svg><div class="a" style="left:182px;top:3px;width:110px;height:19px;background:#1d1d1d;border-radius:5px;border:1px solid #383838;"></div><svg width="15" height="15" viewBox="0 0 15 15" style="left:186px;top:5px"><circle cx="8.5" cy="6" r="4.3" fill="none" stroke="#d8d8d8" stroke-width="1.2"/><path d="M5.5 9 L1.5 13.5" stroke="#d8d8d8" stroke-width="1.3"/></svg><div class="a" style="left:433px;top:2px;width:32px;height:20px;background:#262626;border-radius:4px;border:1px solid #3b3b3b;"></div><svg width="16" height="16" viewBox="0 0 16 16" style="left:435px;top:4px"><path d="M1.5 2.5 H14.5 L9.5 8 V14.5 L7.5 12.5 V8 Z" fill="none" stroke="#e0e0e0" stroke-width="1.1"/></svg><svg width="8" height="5" viewBox="0 0 8 5" style="left:454px;top:10px"><path d="M0.8 0.8 L4.0 4.2 L7.2 0.8" fill="none" stroke="#cfcfcf" stroke-width="1.2"/></svg><div class="a" style="left:470px;top:2px;width:20px;height:20px;background:#3d3d3d;border-radius:4px;"></div><svg width="16" height="16" viewBox="0 0 16 16" style="left:472px;top:4px"><path d="M2 5 H8 M3 6 V14 H12 V10" fill="none" stroke="#cfcfcf" stroke-width="1.1"/><rect x="6" y="9.5" width="3" height="1.2" fill="#cfcfcf"/><circle cx="12" cy="4" r="3.3" fill="#3d3d3d" stroke="#e8e8e8" stroke-width="1.1"/><path d="M12 2.2 V5.8 M10.2 4 H13.8" stroke="#e8e8e8" stroke-width="1"/></svg><svg width="15" height="14" viewBox="0 0 15 14" style="left:23px;top:30px"><rect x="0.5" y="0.5" width="14" height="3.5" fill="#e0e0e0"/><rect x="1.5" y="5" width="12" height="8.5" fill="#e0e0e0"/><rect x="5.5" y="7" width="4" height="1.6" fill="#282828"/></svg><div class="t" style="left:44px;top:30px;color:#d6d6d6;font-size:11.6px;">Коллекция сцены</div><svg width="7" height="6" viewBox="0 0 7 6" style="left:27px;top:54px"><path d="M0 0 H6.5 L3.25 5.5 Z" fill="#b0b0b0"/></svg><div class="a" style="left:40px;top:47px;width:20px;height:18px;background:#3d3d3d;border-radius:4px;border:1px solid #555;"></div><svg width="14" height="14" viewBox="0 0 14 14" style="left:43px;top:49px"><rect x="0.5" y="1" width="13" height="3" fill="#e0e0e0"/><rect x="1.5" y="5" width="11" height="8" fill="#e0e0e0"/><rect x="5" y="7" width="4" height="1.5" fill="#3d3d3d"/></svg><div class="t" style="left:64px;top:50px;color:#d6d6d6;font-size:11.6px;">Collection</div><div class="a" style="left:29px;top:71px;width:1px;height:50px;background:#4a4a4a;border-radius:0px;"></div><div class="a" style="left:0px;top:86px;width:498px;height:20px;background:#334d80;border-radius:0px;"></div><svg width="7" height="7" viewBox="0 0 7 7" style="left:47px;top:74px"><path d="M0.5 0 V6.5 L6 3.25 Z" fill="#c0c0c0"/></svg><svg width="16" height="16" viewBox="0 0 16 16" style="left:62px;top:69px"><circle cx="4" cy="4.5" r="3.3" fill="#e8955a"/><circle cx="10" cy="4" r="3.6" fill="#e8955a"/><circle cx="4" cy="4.5" r="1" fill="#282828"/><circle cx="10" cy="4" r="1.2" fill="#282828"/><rect x="2" y="8" width="10" height="6" rx="1" fill="#e8955a"/><path d="M12 11 L15.5 8.5 V13.5 Z" fill="#e8955a"/></svg><div class="t" style="left:84px;top:70px;color:#d6d6d6;font-size:11.6px;">Camera</div><div class="a" style="left:143px;top:67px;width:20px;height:18px;background:#3d3d3d;border-radius:4px;border:1px solid #555;"></div><svg width="14" height="14" viewBox="0 0 14 14" style="left:146px;top:69px"><path d="M2 6 A3 3 0 0 1 6 2.5 A3 3 0 0 1 12 5 A2 2 0 0 1 11 7 H3 A2 2 0 0 1 2 6 Z" fill="none" stroke="#2fb89a" stroke-width="1.1"/><rect x="2" y="8.5" width="7" height="4" fill="none" stroke="#2fb89a"/><path d="M9.5 10.5 L13 8.5 V12.5 Z" fill="none" stroke="#2fb89a"/></svg><svg width="15" height="15" viewBox="0 0 15 15" style="left:3px;top:89px"><rect x="1" y="2.5" width="3" height="3" fill="none" stroke="#d0d0d0"/><rect x="1" y="11" width="3" height="3" fill="none" stroke="#d0d0d0"/><rect x="10" y="11" width="3" height="3" fill="none" stroke="#d0d0d0"/><rect x="9" y="1" width="5" height="5" fill="#e0e0e0"/><path d="M2.5 5.5 V11 M4 12.5 H10 M4 4 H9 M11.5 6 V11" stroke="#d0d0d0" stroke-width="1"/></svg><svg width="7" height="7" viewBox="0 0 7 7" style="left:47px;top:94px"><path d="M0.5 0 V6.5 L6 3.25 Z" fill="#c8c8c8"/></svg><div class="a" style="left:60px;top:87px;width:20px;height:18px;background:#4d6590;border-radius:4px;border:1px solid #5d75a0;"></div><svg width="14" height="14" viewBox="0 0 14 14" style="left:63px;top:89px"><path d="M1 1.5 H13 L7 13.5 Z" fill="#e8955a"/><path d="M4.2 3.8 H9.8 L7 9.5 Z" fill="#4d6590"/></svg><div class="t" style="left:84px;top:90px;color:#f0a556;font-size:11.6px;">Circle</div><div class="a" style="left:133px;top:87px;width:20px;height:18px;background:#2a6f8e;border-radius:4px;border:1px solid #4a7aa0;"></div><svg width="14" height="14" viewBox="0 0 14 14" style="left:136px;top:89px"><path d="M2.5 2.5 H11.5 L7 11.5 Z" fill="none" stroke="#35d4c0" stroke-width="1.1"/><rect x="0.8" y="0.8" width="3.2" height="3.2" fill="#2a6f8e" stroke="#35d4c0"/><rect x="10" y="0.8" width="3.2" height="3.2" fill="#2a6f8e" stroke="#35d4c0"/><rect x="5.4" y="10" width="3.2" height="3.2" fill="#2a6f8e" stroke="#35d4c0"/></svg><svg width="7" height="7" viewBox="0 0 7 7" style="left:47px;top:114px"><path d="M0.5 0 V6.5 L6 3.25 Z" fill="#c0c0c0"/></svg><svg width="14" height="16" viewBox="0 0 14 16" style="left:63px;top:109px"><circle cx="7" cy="6" r="5.5" fill="#e8955a"/><rect x="4.5" y="10" width="5" height="2.5" fill="#e8955a"/><rect x="4.5" y="13" width="5" height="1.3" fill="#e8955a"/><path d="M4.5 5.5 V8 H9.5 V5.5 M7 6 V8" fill="none" stroke="#282828" stroke-width="1"/></svg><div class="t" style="left:84px;top:110px;color:#d6d6d6;font-size:11.6px;">Light</div><svg width="15" height="15" viewBox="0 0 15 15" style="left:131px;top:109px"><path d="M4 12.5 A6 6 0 1 1 11 12.5" fill="none" stroke="#2fb89a" stroke-width="1.2"/><circle cx="7.5" cy="7" r="1.3" fill="none" stroke="#2fb89a"/><path d="M7.5 9 V14.5" stroke="#2fb89a" stroke-dasharray="1.5 1"/></svg><div class="a" style="left:433px;top:51px;width:11px;height:11px;background:#e8e8e8;border-radius:1px;"></div><svg width="9" height="9" viewBox="0 0 9 9" style="left:434px;top:52px"><path d="M1.5 4.5 L3.8 7 L8 1.8" fill="none" stroke="#282828" stroke-width="1.6"/></svg><svg width="15" height="10" viewBox="0 0 15 10" style="left:450px;top:51px"><path d="M0.8 5 Q7.5 -2.5 14.2 5 Q7.5 12.5 0.8 5 Z" fill="#e8e8e8"/><circle cx="7.5" cy="5" r="3" fill="#282828"/><circle cx="7.5" cy="5" r="1.6" fill="#e8e8e8"/></svg><svg width="15" height="13" viewBox="0 0 15 13" style="left:470px;top:50px"><rect x="0.5" y="2.5" width="13.5" height="10" rx="1" fill="#e8e8e8"/><rect x="3" y="0.5" width="8" height="3" fill="#e8e8e8"/><circle cx="7.2" cy="7.5" r="3.5" fill="#282828"/><circle cx="7.2" cy="7.5" r="2" fill="#e8e8e8"/></svg><svg width="15" height="10" viewBox="0 0 15 10" style="left:450px;top:71px"><path d="M0.8 5 Q7.5 -2.5 14.2 5 Q7.5 12.5 0.8 5 Z" fill="#e8e8e8"/><circle cx="7.5" cy="5" r="3" fill="#282828"/><circle cx="7.5" cy="5" r="1.6" fill="#e8e8e8"/></svg><svg width="15" height="13" viewBox="0 0 15 13" style="left:470px;top:70px"><rect x="0.5" y="2.5" width="13.5" height="10" rx="1" fill="#e8e8e8"/><rect x="3" y="0.5" width="8" height="3" fill="#e8e8e8"/><circle cx="7.2" cy="7.5" r="3.5" fill="#282828"/><circle cx="7.2" cy="7.5" r="2" fill="#e8e8e8"/></svg><svg width="15" height="10" viewBox="0 0 15 10" style="left:450px;top:91px"><path d="M0.8 5 Q7.5 -2.5 14.2 5 Q7.5 12.5 0.8 5 Z" fill="#e8e8e8"/><circle cx="7.5" cy="5" r="3" fill="#334d80"/><circle cx="7.5" cy="5" r="1.6" fill="#e8e8e8"/></svg><svg width="15" height="13" viewBox="0 0 15 13" style="left:470px;top:90px"><rect x="0.5" y="2.5" width="13.5" height="10" rx="1" fill="#e8e8e8"/><rect x="3" y="0.5" width="8" height="3" fill="#e8e8e8"/><circle cx="7.2" cy="7.5" r="3.5" fill="#334d80"/><circle cx="7.2" cy="7.5" r="2" fill="#e8e8e8"/></svg><svg width="15" height="10" viewBox="0 0 15 10" style="left:450px;top:111px"><path d="M0.8 5 Q7.5 -2.5 14.2 5 Q7.5 12.5 0.8 5 Z" fill="#e8e8e8"/><circle cx="7.5" cy="5" r="3" fill="#282828"/><circle cx="7.5" cy="5" r="1.6" fill="#e8e8e8"/></svg><svg width="15" height="13" viewBox="0 0 15 13" style="left:470px;top:110px"><rect x="0.5" y="2.5" width="13.5" height="10" rx="1" fill="#e8e8e8"/><rect x="3" y="0.5" width="8" height="3" fill="#e8e8e8"/><circle cx="7.2" cy="7.5" r="3.5" fill="#282828"/><circle cx="7.2" cy="7.5" r="2" fill="#e8e8e8"/></svg></div><div id="pr" class="a" style="left:1422px;top:340px;width:497px;height:197px;background:#2b2b2b;border-radius:7px;overflow:hidden"><div class="a" style="left:0px;top:0px;width:498px;height:25px;background:#2b2b2b;border-radius:0px;"></div><div class="a" style="left:8px;top:2px;width:32px;height:20px;background:#262626;border-radius:4px;border:1px solid #3b3b3b;"></div><svg width="16" height="16" viewBox="0 0 16 16" style="left:11px;top:4px"><rect x="1" y="1.5" width="13" height="5.5" rx="2.75" fill="#e8e8e8"/><rect x="1" y="8.5" width="13" height="5.5" rx="2.75" fill="#e8e8e8"/><path d="M8 3 H11.5 A1.4 1.4 0 0 1 11.5 5.6 H8 Z M8 10 H11.5 A1.4 1.4 0 0 1 11.5 12.6 H8 Z" fill="#262626"/></svg><svg width="8" height="5" viewBox="0 0 8 5" style="left:29px;top:10px"><path d="M0.8 0.8 L4.0 4.2 L7.2 0.8" fill="none" stroke="#cfcfcf" stroke-width="1.2"/></svg><div class="a" style="left:195px;top:3px;width:110px;height:19px;background:#1d1d1d;border-radius:5px;border:1px solid #383838;"></div><svg width="15" height="15" viewBox="0 0 15 15" style="left:199px;top:5px"><circle cx="8.5" cy="6" r="4.3" fill="none" stroke="#d8d8d8" stroke-width="1.2"/><path d="M5.5 9 L1.5 13.5" stroke="#d8d8d8" stroke-width="1.3"/></svg><div class="a" style="left:471px;top:3px;width:19px;height:19px;background:#262626;border-radius:4px;border:1px solid #3b3b3b;"></div><svg width="8" height="5" viewBox="0 0 8 5" style="left:476px;top:11px"><path d="M0.8 0.8 L4.0 4.2 L7.2 0.8" fill="none" stroke="#cfcfcf" stroke-width="1.2"/></svg><div class="a" style="left:0px;top:25px;width:28px;height:180px;background:#1f1f1f;border-radius:0px;"></div><div class="a" style="left:28px;top:25px;width:470px;height:180px;background:#2d2d2d;border-radius:0px;"></div><svg width="15" height="15" viewBox="0 0 15 15" style="left:8px;top:39px"><path d="M3.5 1 V8" stroke="#d0d0d0" stroke-width="1.2"/><ellipse cx="3.5" cy="11" rx="2.6" ry="3" fill="#d0d0d0"/><path d="M10.5 7 V14" stroke="#d0d0d0" stroke-width="2"/><path d="M8 1.5 V4.5 A2.5 2.5 0 0 0 13 4.5 V1.5" fill="none" stroke="#d0d0d0" stroke-width="1.6"/></svg><svg width="15" height="15" viewBox="0 0 15 15" style="left:8px;top:75px"><rect x="1" y="4.5" width="13" height="9" rx="1" fill="none" stroke="#d0d0d0" stroke-width="1.2"/><rect x="4" y="2" width="5" height="2.5" fill="#d0d0d0"/><path d="M1 8 H11 M11 5 V13.5" stroke="#d0d0d0"/><rect x="12" y="7" width="2" height="2" fill="#d0d0d0"/><rect x="12" y="10" width="2" height="2" fill="#d0d0d0"/></svg><svg width="15" height="15" viewBox="0 0 15 15" style="left:8px;top:104px"><rect x="1" y="1" width="13" height="4" rx="1" fill="#d0d0d0"/><rect x="3" y="5" width="9" height="9" fill="#d0d0d0"/><path d="M4.5 12.5 L7.5 8.5 L10.5 12.5 Z" fill="#1f1f1f"/></svg><svg width="15" height="15" viewBox="0 0 15 15" style="left:8px;top:131px"><path d="M1 5 V14 H10 M2.5 3.5 V12.5 H11.5" fill="none" stroke="#d0d0d0" stroke-width="1"/><rect x="4.5" y="1" width="9.5" height="9.5" fill="#1f1f1f" stroke="#d0d0d0"/><path d="M5 10 L8 5 L10 8 L12 6 L14 10 Z" fill="#d0d0d0"/></svg><svg width="15" height="15" viewBox="0 0 15 15" style="left:8px;top:160px"><path d="M4 2 L1 9 A3 3 0 0 0 7 9 Z" fill="#d0d0d0"/><circle cx="12" cy="3" r="1.8" fill="#d0d0d0"/><circle cx="9.5" cy="10.5" r="3.6" fill="#1f1f1f" stroke="#d0d0d0" stroke-width="1.2"/></svg><svg width="15" height="15" viewBox="0 0 15 15" style="left:8px;top:187px"><circle cx="7.5" cy="7.5" r="6" fill="none" stroke="#c9455a" stroke-width="1.3"/><path d="M3 5 L7 3 L8 7 L5 9 Z" fill="#c9455a"/></svg><svg width="15" height="15" viewBox="0 0 15 15" style="left:39px;top:36px"><path d="M0.5 4 V0.5 H4 M11 0.5 H14.5 V4 M14.5 11 V14.5 H11 M4 14.5 H0.5 V11" fill="none" stroke="#cfcfcf"/><rect x="3" y="3" width="9" height="9" fill="#e8e8e8"/></svg><div class="t" style="left:62px;top:37px;color:#e0e0e0;font-size:11.6px;">Circle</div><svg width="14" height="14" viewBox="0 0 14 14" style="left:474px;top:36px"><path d="M7 3 L11 7 L9 9 L8 12 L2 6 L5 5 Z M8.5 1.5 L12.5 5.5" fill="none" stroke="#b0b0b0" stroke-width="1"/><path d="M4.5 9.5 L0.8 13.2" stroke="#b0b0b0"/></svg><div class="a" style="left:492px;top:35px;width:3px;height:31px;background:#444;border-radius:1.5px;"></div><div class="a" style="left:37px;top:70px;width:452px;height:19px;background:#1d1d1d;border-radius:4px;border:1px solid #2c2c2c;"></div><div class="a" style="left:37px;top:70px;width:31px;height:19px;background:#2b2b2b;border-radius:4px 0 0 4pxpx;border:1px solid #2c2c2c;"></div><svg width="15" height="15" viewBox="0 0 15 15" style="left:41px;top:72px"><path d="M0.5 4 V0.5 H4 M11 0.5 H14.5 V4 M14.5 11 V14.5 H11 M4 14.5 H0.5 V11" fill="none" stroke="#cfcfcf"/><rect x="3" y="3" width="9" height="9" fill="#e8e8e8"/></svg><svg width="8" height="5" viewBox="0 0 8 5" style="left:59px;top:79px"><path d="M0.8 0.8 L4.0 4.2 L7.2 0.8" fill="none" stroke="#cfcfcf" stroke-width="1.2"/></svg><div class="t" style="left:75px;top:72px;color:#e0e0e0;font-size:11.6px;">Circle</div><div class="a" style="left:36px;top:99px;width:454px;height:83px;background:#3a3a3a;border-radius:5px;"></div><svg width="10" height="6" viewBox="0 0 10 6" style="left:44px;top:109px"><path d="M0.8 0.8 L4.5 4.8 L8.2 0.8" fill="none" stroke="#cfcfcf" stroke-width="1.1"/></svg><div class="t" style="left:58px;top:105px;color:#e0e0e0;font-size:11.6px;">Activity Culling</div><svg width="11" height="4" viewBox="0 0 11 4" style="left:473px;top:110px"><g fill="#888"><rect x="0" y="0" width="1.2" height="1.2"/><rect x="3" y="0" width="1.2" height="1.2"/><rect x="6" y="0" width="1.2" height="1.2"/><rect x="9" y="0" width="1.2" height="1.2"/><rect x="0" y="2.5" width="1.2" height="1.2"/><rect x="3" y="2.5" width="1.2" height="1.2"/><rect x="6" y="2.5" width="1.2" height="1.2"/><rect x="9" y="2.5" width="1.2" height="1.2"/></g></svg><div class="a" style="left:45px;top:136px;width:12px;height:12px;background:#4d4d4d;border-radius:3px;"></div><div class="t" style="left:61px;top:135px;color:#e0e0e0;font-size:11.6px;">Физика</div><div class="a" style="left:268px;top:136px;width:12px;height:12px;background:#4d4d4d;border-radius:3px;"></div><div class="t" style="left:284px;top:135px;color:#e0e0e0;font-size:11.6px;">Logic</div><div class="a" style="left:45px;top:155px;width:213px;height:18px;background:#444444;border-radius:4px;"></div><div class="t" style="left:60px;top:157px;color:#8e8e8e;font-size:11.6px;">Physics Radius</div><div class="t" style="left:224px;top:157px;color:#8e8e8e;font-size:11.6px;width:21px;text-align:right">0 m</div><div class="a" style="left:268px;top:155px;width:213px;height:18px;background:#444444;border-radius:4px;"></div><div class="t" style="left:283px;top:157px;color:#8e8e8e;font-size:11.6px;">Logic Radius</div><div class="t" style="left:447px;top:157px;color:#8e8e8e;font-size:11.6px;width:21px;text-align:right">0 m</div><div class="a" style="left:36px;top:184px;width:454px;height:30px;background:#3a3a3a;border-radius:5px;"></div><svg width="10" height="6" viewBox="0 0 10 6" style="left:44px;top:194px"><path d="M0.8 0.8 L4.5 4.8 L8.2 0.8" fill="none" stroke="#cfcfcf" stroke-width="1.1"/></svg><div class="t" style="left:58px;top:190px;color:#e0e0e0;font-size:11.6px;">Levels of Detail</div></div><div id="ne" class="a" style="left:1422px;top:539px;width:497px;height:458px;background:#1d1d1d;border-radius:7px;overflow:hidden"><svg width="498" height="458" viewBox="0 0 498 458" style="left:0px;top:0px"><g fill="#363636"><rect x="12.6" y="53.5" width="2" height="2"/><rect x="54.7" y="53.5" width="2" height="2"/><rect x="96.8" y="53.5" width="2" height="2"/><rect x="138.9" y="53.5" width="2" height="2"/><rect x="181.0" y="53.5" width="2" height="2"/><rect x="223.1" y="53.5" width="2" height="2"/><rect x="265.2" y="53.5" width="2" height="2"/><rect x="307.3" y="53.5" width="2" height="2"/><rect x="349.4" y="53.5" width="2" height="2"/><rect x="391.5" y="53.5" width="2" height="2"/><rect x="433.6" y="53.5" width="2" height="2"/><rect x="475.7" y="53.5" width="2" height="2"/><rect x="12.6" y="95.7" width="2" height="2"/><rect x="54.7" y="95.7" width="2" height="2"/><rect x="96.8" y="95.7" width="2" height="2"/><rect x="138.9" y="95.7" width="2" height="2"/><rect x="181.0" y="95.7" width="2" height="2"/><rect x="223.1" y="95.7" width="2" height="2"/><rect x="265.2" y="95.7" width="2" height="2"/><rect x="307.3" y="95.7" width="2" height="2"/><rect x="349.4" y="95.7" width="2" height="2"/><rect x="391.5" y="95.7" width="2" height="2"/><rect x="433.6" y="95.7" width="2" height="2"/><rect x="475.7" y="95.7" width="2" height="2"/><rect x="12.6" y="137.9" width="2" height="2"/><rect x="54.7" y="137.9" width="2" height="2"/><rect x="96.8" y="137.9" width="2" height="2"/><rect x="138.9" y="137.9" width="2" height="2"/><rect x="181.0" y="137.9" width="2" height="2"/><rect x="223.1" y="137.9" width="2" height="2"/><rect x="265.2" y="137.9" width="2" height="2"/><rect x="307.3" y="137.9" width="2" height="2"/><rect x="349.4" y="137.9" width="2" height="2"/><rect x="391.5" y="137.9" width="2" height="2"/><rect x="433.6" y="137.9" width="2" height="2"/><rect x="475.7" y="137.9" width="2" height="2"/><rect x="12.6" y="180.1" width="2" height="2"/><rect x="54.7" y="180.1" width="2" height="2"/><rect x="96.8" y="180.1" width="2" height="2"/><rect x="138.9" y="180.1" width="2" height="2"/><rect x="181.0" y="180.1" width="2" height="2"/><rect x="223.1" y="180.1" width="2" height="2"/><rect x="265.2" y="180.1" width="2" height="2"/><rect x="307.3" y="180.1" width="2" height="2"/><rect x="349.4" y="180.1" width="2" height="2"/><rect x="391.5" y="180.1" width="2" height="2"/><rect x="433.6" y="180.1" width="2" height="2"/><rect x="475.7" y="180.1" width="2" height="2"/><rect x="12.6" y="222.3" width="2" height="2"/><rect x="54.7" y="222.3" width="2" height="2"/><rect x="96.8" y="222.3" width="2" height="2"/><rect x="138.9" y="222.3" width="2" height="2"/><rect x="181.0" y="222.3" width="2" height="2"/><rect x="223.1" y="222.3" width="2" height="2"/><rect x="265.2" y="222.3" width="2" height="2"/><rect x="307.3" y="222.3" width="2" height="2"/><rect x="349.4" y="222.3" width="2" height="2"/><rect x="391.5" y="222.3" width="2" height="2"/><rect x="433.6" y="222.3" width="2" height="2"/><rect x="475.7" y="222.3" width="2" height="2"/><rect x="12.6" y="264.5" width="2" height="2"/><rect x="54.7" y="264.5" width="2" height="2"/><rect x="96.8" y="264.5" width="2" height="2"/><rect x="138.9" y="264.5" width="2" height="2"/><rect x="181.0" y="264.5" width="2" height="2"/><rect x="223.1" y="264.5" width="2" height="2"/><rect x="265.2" y="264.5" width="2" height="2"/><rect x="307.3" y="264.5" width="2" height="2"/><rect x="349.4" y="264.5" width="2" height="2"/><rect x="391.5" y="264.5" width="2" height="2"/><rect x="433.6" y="264.5" width="2" height="2"/><rect x="475.7" y="264.5" width="2" height="2"/><rect x="12.6" y="306.7" width="2" height="2"/><rect x="54.7" y="306.7" width="2" height="2"/><rect x="96.8" y="306.7" width="2" height="2"/><rect x="138.9" y="306.7" width="2" height="2"/><rect x="181.0" y="306.7" width="2" height="2"/><rect x="223.1" y="306.7" width="2" height="2"/><rect x="265.2" y="306.7" width="2" height="2"/><rect x="307.3" y="306.7" width="2" height="2"/><rect x="349.4" y="306.7" width="2" height="2"/><rect x="391.5" y="306.7" width="2" height="2"/><rect x="433.6" y="306.7" width="2" height="2"/><rect x="475.7" y="306.7" width="2" height="2"/><rect x="12.6" y="348.9" width="2" height="2"/><rect x="54.7" y="348.9" width="2" height="2"/><rect x="96.8" y="348.9" width="2" height="2"/><rect x="138.9" y="348.9" width="2" height="2"/><rect x="181.0" y="348.9" width="2" height="2"/><rect x="223.1" y="348.9" width="2" height="2"/><rect x="265.2" y="348.9" width="2" height="2"/><rect x="307.3" y="348.9" width="2" height="2"/><rect x="349.4" y="348.9" width="2" height="2"/><rect x="391.5" y="348.9" width="2" height="2"/><rect x="433.6" y="348.9" width="2" height="2"/><rect x="475.7" y="348.9" width="2" height="2"/><rect x="12.6" y="391.1" width="2" height="2"/><rect x="54.7" y="391.1" width="2" height="2"/><rect x="96.8" y="391.1" width="2" height="2"/><rect x="138.9" y="391.1" width="2" height="2"/><rect x="181.0" y="391.1" width="2" height="2"/><rect x="223.1" y="391.1" width="2" height="2"/><rect x="265.2" y="391.1" width="2" height="2"/><rect x="307.3" y="391.1" width="2" height="2"/><rect x="349.4" y="391.1" width="2" height="2"/><rect x="391.5" y="391.1" width="2" height="2"/><rect x="433.6" y="391.1" width="2" height="2"/><rect x="475.7" y="391.1" width="2" height="2"/><rect x="12.6" y="433.3" width="2" height="2"/><rect x="54.7" y="433.3" width="2" height="2"/><rect x="96.8" y="433.3" width="2" height="2"/><rect x="138.9" y="433.3" width="2" height="2"/><rect x="181.0" y="433.3" width="2" height="2"/><rect x="223.1" y="433.3" width="2" height="2"/><rect x="265.2" y="433.3" width="2" height="2"/><rect x="307.3" y="433.3" width="2" height="2"/><rect x="349.4" y="433.3" width="2" height="2"/><rect x="391.5" y="433.3" width="2" height="2"/><rect x="433.6" y="433.3" width="2" height="2"/><rect x="475.7" y="433.3" width="2" height="2"/></g></svg><div class="a" style="left:8px;top:5px;width:31px;height:19px;background:#262626;border-radius:4px;border:1px solid #3b3b3b;"></div><svg width="15" height="15" viewBox="0 0 15 15" style="left:11px;top:7px"><circle cx="7.5" cy="7.5" r="6.3" fill="none" stroke="#e0e0e0" stroke-width="1.2"/><path d="M4 6.5 A3.5 3.5 0 0 1 6.5 4" fill="none" stroke="#e0e0e0" stroke-width="1"/><circle cx="7.5" cy="3.5" r=".8" fill="#e0e0e0"/></svg><svg width="8" height="5" viewBox="0 0 8 5" style="left:28px;top:13px"><path d="M0.8 0.8 L4.0 4.2 L7.2 0.8" fill="none" stroke="#cfcfcf" stroke-width="1.2"/></svg><div class="a" style="left:45px;top:5px;width:110px;height:19px;background:#262626;border-radius:4px;border:1px solid #3b3b3b;"></div><svg width="15" height="15" viewBox="0 0 15 15" style="left:48px;top:7px"><path d="M0.5 4 V0.5 H4 M11 0.5 H14.5 V4 M14.5 11 V14.5 H11 M4 14.5 H0.5 V11" fill="none" stroke="#cfcfcf"/><rect x="3" y="3" width="9" height="9" fill="#e8e8e8"/></svg><div class="t" style="left:70px;top:7px;color:#e0e0e0;font-size:11.6px;">Объект</div><svg width="8" height="5" viewBox="0 0 8 5" style="left:144px;top:13px"><path d="M0.8 0.8 L4.0 4.2 L7.2 0.8" fill="none" stroke="#cfcfcf" stroke-width="1.2"/></svg><div class="t" style="left:167px;top:7px;color:#d9d9d9;font-size:11.6px;">Вид</div><div class="t" style="left:203px;top:7px;color:#d9d9d9;font-size:11.6px;">Выделение</div><div class="t" style="left:279px;top:7px;color:#d9d9d9;font-size:11.6px;">Добавить</div><div class="t" style="left:345px;top:7px;color:#d9d9d9;font-size:11.6px;">Ноды</div><div class="a" style="left:398px;top:5px;width:80px;height:19px;background:#262626;border-radius:4px;border:1px solid #3b3b3b;"></div><div class="t" style="left:406px;top:7px;color:#e0e0e0;font-size:11.6px;">Слот</div><svg width="8" height="5" viewBox="0 0 8 5" style="left:466px;top:13px"><path d="M0.8 0.8 L4.0 4.2 L7.2 0.8" fill="none" stroke="#cfcfcf" stroke-width="1.2"/></svg><div class="a" style="left:483px;top:5px;width:30px;height:19px;background:#262626;border-radius:4px;border:1px solid #3b3b3b;"></div><svg width="15" height="15" viewBox="0 0 15 15" style="left:486px;top:7px"><circle cx="7.5" cy="7.5" r="6" fill="#e8e8e8"/><path d="M7.5 1.5 A6 6 0 0 1 7.5 13.5 Z" fill="#333"/></svg><svg width="6" height="10" viewBox="0 0 6 10" style="left:0px;top:42px"><path d="M1 1 L4.5 4.5 L1 8" fill="none" stroke="#aaa" stroke-width="1"/></svg><div class="a" style="left:492px;top:35px;width:3px;height:348px;background:#2a2a2a;border-radius:1.5px;"></div><svg width="7" height="10" viewBox="0 0 7 10" style="left:489px;top:42px"><path d="M5.5 1 L2 4.5 L5.5 8" fill="none" stroke="#b0b0b0" stroke-width="1.1"/></svg><div class="a" style="left:8px;top:453px;width:481px;height:3px;background:#3a3a3a;border-radius:1.5px;"></div></div><svg width="20" height="20" style="left:9px;top:4px" viewBox="9 4 20 20">
<path d="M13.8 7.8 H17.2 V14.5 A2.1 2.1 0 0 0 21.6 14.5 V7.8 H25 V14.8 A5.6 5.6 0 0 1 13.8 14.8 Z" fill="#e8952e"/>
<path d="M15 16.8 L21.5 13.5" stroke="#1f1f1f" stroke-width="1.4"/>
<circle cx="19.3" cy="14.6" r="2.6" fill="#1f1f1f"/><circle cx="19.3" cy="14.8" r="1.3" fill="#f0d8b0"/></svg><div class="t" style="left:35px;top:6px;color:#d6d6d6;font-size:11.8px;">Файл</div><div class="t" style="left:79px;top:6px;color:#d6d6d6;font-size:11.8px;">Правка</div><div class="t" style="left:132px;top:6px;color:#d6d6d6;font-size:11.8px;">Рендеринг</div><div class="t" style="left:204px;top:6px;color:#d6d6d6;font-size:11.8px;">Окно</div><div class="t" style="left:246px;top:6px;color:#d6d6d6;font-size:11.8px;">Справка</div><div class="a" style="left:315px;top:6px;width:52px;height:19px;background:#2e2e2e;border-radius:4px 4px 0 0"></div><div class="t" style="left:324px;top:9px;color:#e6e6e6;font-size:11.6px;">Layout</div><div class="t" style="left:378px;top:9px;color:#a8a8a8;font-size:11.6px;">Modeling</div><div class="t" style="left:443px;top:9px;color:#a8a8a8;font-size:11.6px;">Sculpting</div><div class="t" style="left:509px;top:9px;color:#a8a8a8;font-size:11.6px;">UV Editing</div><div class="t" style="left:581px;top:9px;color:#a8a8a8;font-size:11.6px;">Texture Paint</div><div class="t" style="left:667px;top:9px;color:#a8a8a8;font-size:11.6px;">Shading</div><div class="t" style="left:726px;top:9px;color:#a8a8a8;font-size:11.6px;">Animation</div><div class="t" style="left:797px;top:9px;color:#a8a8a8;font-size:11.6px;">Rendering</div><div class="t" style="left:867px;top:9px;color:#a8a8a8;font-size:11.6px;">Compositing</div><div class="t" style="left:949px;top:9px;color:#a8a8a8;font-size:11.6px;">Geometry Nodes</div><div class="t" style="left:1053px;top:9px;color:#a8a8a8;font-size:11.6px;">Scripting</div><svg width="12" height="12" style="left:1111px;top:9px"><path d="M6 1 V11 M1 6 H11" stroke="#a8a8a8" stroke-width="1.1"/></svg><div class="a" style="left:1523px;top:3px;width:191px;height:20px;background:#1b1b1b;border-radius:4px;border:1px solid #343434;"></div><div class="a" style="left:1524px;top:4px;width:31px;height:18px;background:#262626;border-radius:3px 0 0 3pxpx;"></div><div class="a" style="left:1555px;top:4px;width:1px;height:18px;background:#343434;border-radius:0px;"></div><div class="a" style="left:1674px;top:4px;width:20px;height:18px;background:#3a3a3a;border-radius:0px;"></div><div class="a" style="left:1694px;top:4px;width:19px;height:18px;background:#262626;border-radius:0 3px 3px 0px;"></div><svg width="16" height="16" viewBox="0 0 16 16" style="left:1527px;top:5px"><path d="M4.5 1.5 L0.8 10 A2.2 2.2 0 0 0 5 11 Z" fill="#e0e0e0"/><circle cx="11.8" cy="2.8" r="1.9" fill="#e0e0e0"/><circle cx="9.8" cy="10.8" r="3.9" fill="#262626" stroke="#e0e0e0" stroke-width="1.1"/><path d="M8 9.6 A2 2 0 0 1 9.8 8.6" stroke="#e0e0e0" fill="none" stroke-width=".9"/></svg><svg width="15" height="15" viewBox="0 0 15 15" style="left:1656px;top:5px"><path d="M7 3 L11 7 L9 9 L8 12 L2.5 6.5 L5 5 Z M8.5 1.5 L12.5 5.5" fill="none" stroke="#bdbdbd" stroke-width="1"/><path d="M4.5 9.5 L0.8 13.2" stroke="#bdbdbd"/></svg><svg width="8" height="5" viewBox="0 0 8 5" style="left:1545px;top:11px"><path d="M0.8 0.8 L4.0 4.2 L7.2 0.8" fill="none" stroke="#cfcfcf" stroke-width="1.2"/></svg><svg width="15" height="15" viewBox="0 0 15 15" style="left:1677px;top:5px"><path d="M4 3 V1 H10.5 L13.5 4 V10.5 H11" fill="none" stroke="#d0d0d0" stroke-width="1"/><path d="M1.5 4.5 H10.5 V13.5 H1.5 Z" fill="none" stroke="#d0d0d0" stroke-width="1"/></svg><svg width="11" height="11" viewBox="0 0 11 11" style="left:1698px;top:7px"><path d="M1.5 1.5 L9.5 9.5 M9.5 1.5 L1.5 9.5" stroke="#5a5a5a" stroke-width="1"/></svg><div class="t" style="left:1562px;top:6px;color:#e0e0e0;font-size:11.6px;">Scene</div><div class="a" style="left:1720px;top:3px;width:191px;height:20px;background:#1b1b1b;border-radius:4px;border:1px solid #343434;"></div><div class="a" style="left:1721px;top:4px;width:31px;height:18px;background:#262626;border-radius:3px 0 0 3pxpx;"></div><div class="a" style="left:1752px;top:4px;width:1px;height:18px;background:#343434;border-radius:0px;"></div><div class="a" style="left:1871px;top:4px;width:20px;height:18px;background:#3a3a3a;border-radius:0px;"></div><div class="a" style="left:1891px;top:4px;width:19px;height:18px;background:#262626;border-radius:0 3px 3px 0px;"></div><svg width="16" height="16" viewBox="0 0 16 16" style="left:1724px;top:5px"><path d="M1 5 V14 H10 M2.5 3.5 V12.5 H11.5" fill="none" stroke="#d8d8d8" stroke-width="1"/><rect x="4.5" y="1" width="9.5" height="9.5" fill="#262626" stroke="#e0e0e0"/><path d="M5 10 L8 5 L10 8 L12 6 L14 10 Z" fill="#e0e0e0"/><circle cx="11.5" cy="3.5" r="1" fill="#e0e0e0"/></svg><svg width="8" height="5" viewBox="0 0 8 5" style="left:1742px;top:11px"><path d="M0.8 0.8 L4.0 4.2 L7.2 0.8" fill="none" stroke="#cfcfcf" stroke-width="1.2"/></svg><svg width="15" height="15" viewBox="0 0 15 15" style="left:1874px;top:5px"><path d="M4 3 V1 H10.5 L13.5 4 V10.5 H11" fill="none" stroke="#d0d0d0" stroke-width="1"/><path d="M1.5 4.5 H10.5 V13.5 H1.5 Z" fill="none" stroke="#d0d0d0" stroke-width="1"/></svg><svg width="11" height="11" viewBox="0 0 11 11" style="left:1895px;top:7px"><path d="M1.5 1.5 L9.5 9.5 M9.5 1.5 L1.5 9.5" stroke="#5a5a5a" stroke-width="1"/></svg><div class="t" style="left:1759px;top:6px;color:#e0e0e0;font-size:11.6px;">ViewLayer</div><svg width="11" height="14" style="left:12px;top:1000px" viewBox="0 0 10 14"><rect x="1" y="0.8" width="8" height="12.4" rx="3" fill="none" stroke="#ababab" stroke-width="1"/><path d="M1.5 5 V2.5 A2 2 0 0 1 3.5 0.8 H5 V5 Z" fill="#ababab"/></svg><div class="t" style="left:34px;top:1001px;color:#ababab;font-size:11.5px">Выделить</div><svg width="11" height="14" style="left:223px;top:1000px" viewBox="0 0 10 14"><rect x="1" y="0.8" width="8" height="12.4" rx="3" fill="none" stroke="#ababab" stroke-width="1"/><path d="M4 2 H6 V6 H4 Z" fill="#ababab"/></svg><div class="t" style="left:245px;top:1001px;color:#ababab;font-size:11.5px">Повернуть вид</div><svg width="11" height="14" style="left:434px;top:1000px" viewBox="0 0 10 14"><rect x="1" y="0.8" width="8" height="12.4" rx="3" fill="none" stroke="#ababab" stroke-width="1"/><path d="M5 0.8 H6.5 A2 2 0 0 1 8.5 2.5 V5 H5 Z" fill="#ababab"/></svg><div class="t" style="left:456px;top:1001px;color:#ababab;font-size:11.5px">Вызвать меню</div><div class="t" style="left:1272px;top:1001px;color:#ababab;font-size:11.5px">Circle | Вершин:169/169 | Рёбер:210/210 | Граней:42/42 | Треуг.:294 | Objects:1/3 | UPBGE 0.36.1 (based on Blender 3.6.2)</div></body></html>
